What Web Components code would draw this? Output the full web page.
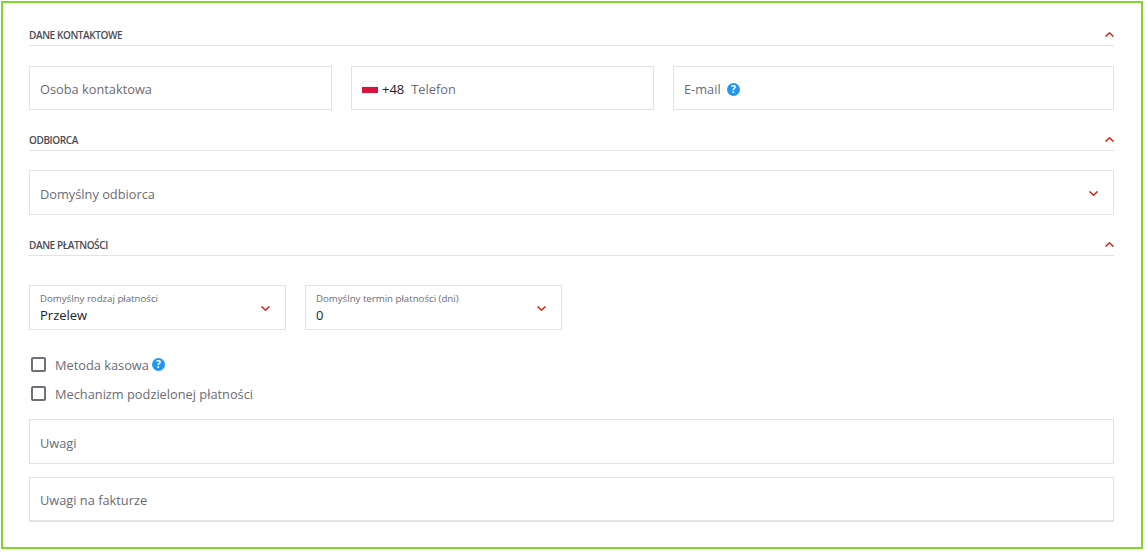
<!DOCTYPE html>
<html lang="pl"><head><meta charset="utf-8"><title>Dane</title>
<style>
html,body{margin:0;background:#fff}
body{font-family:"Open Sans",sans-serif;color:#6b6b76}
</style></head><body>
<form-frame>
  <form-section title="DANE KONTAKTOWE" style="margin-bottom:20px"></form-section>
  <form-row style="--cols:303px 303px 441px;margin-bottom:18px">
    <text-field label="Osoba kontaktowa"></text-field>
    <text-field label="Telefon" prefix="+48" flag></text-field>
    <text-field label="E-mail" help></text-field>
  </form-row>
  <form-section title="ODBIORCA" style="margin-bottom:19px"></form-section>
  <form-row style="--cols:1085px;margin-bottom:18px">
    <text-field label="Domyślny odbiorca" select tall></text-field>
  </form-row>
  <form-section title="DANE PŁATNOŚCI" style="margin-bottom:29px"></form-section>
  <form-row style="--cols:257px 257px;margin-bottom:20px">
    <float-select label="Domyślny rodzaj płatności" value="Przelew"></float-select>
    <float-select label="Domyślny termin płatności (dni)" value="0"></float-select>
  </form-row>
  <check-box label="Metoda kasowa" help></check-box>
  <check-box label="Mechanizm podzielonej płatności" style="margin-bottom:11px"></check-box>
  <text-field label="Uwagi" tall style="margin-bottom:13px"></text-field>
  <text-field label="Uwagi na fakturze" tall thick></text-field>
</form-frame>
<script>
const HELP=(s)=>`<svg class="help" width="${s}" height="${s}" viewBox="0 0 14 14"><circle cx="7" cy="7" r="7" fill="#2196f3"/><text x="7" y="11" text-anchor="middle" font-family="'Open Sans',sans-serif" font-size="11" font-weight="700" fill="#fff">?</text></svg>`;
const CHEV=(up)=>`<svg class="cv" width="9" height="5" viewBox="0 0 9 5" style="display:block"><path d="${up?'M.5 4.6 4.500.8l4 3.800':'M.5.4l4 3.800 4-3.800'}" fill="none" stroke="#d8200c" stroke-width="1.4"/></svg>`;
class Base extends HTMLElement{
  render(html){ if(!this.shadowRoot) this.attachShadow({mode:'open'}); this.shadowRoot.innerHTML=html; }
}
customElements.define('form-frame',class extends Base{connectedCallback(){this.render(`<style>
:host{display:block;box-sizing:border-box;margin:1px;width:1142px;height:548px;border:2px solid #7ed62f;padding:20px 27px 0 26px}
</style><slot></slot>`)}});
customElements.define('form-section',class extends Base{connectedCallback(){this.render(`<style>
:host{display:flex;box-sizing:border-box;height:23px;border-bottom:1px solid #e2e2e2;align-items:flex-start;justify-content:space-between;padding-top:6px;font:600 10px/12px "Open Sans",sans-serif;letter-spacing:-.4px;color:#4a4a52;width:1085px}
svg{margin-top:3px}
</style><span>${this.getAttribute('title')}</span>${CHEV(true)}`)}});
customElements.define('form-row',class extends Base{connectedCallback(){this.render(`<style>
:host{display:grid;grid-template-columns:var(--cols);column-gap:19px}
</style><slot></slot>`)}});
customElements.define('text-field',class extends Base{connectedCallback(){
const a=n=>this.hasAttribute(n);
this.render(`<style>
:host{display:flex;align-items:center;box-sizing:border-box;height:${a('tall')?45:44}px;border:1px solid #e2e2e2;${a('thick')?'border-bottom-width:2px;':''}padding:2px 15px 0 10px;font:400 12.8px/18px "Open Sans",sans-serif;color:#6b6b76}
.flag{box-sizing:border-box;width:16px;height:12px;display:flex;flex-direction:column;margin:0 4px 4px 0;flex:none}
.flag i{flex:1;display:block}
.pre{color:#22222a;margin-right:7px;font-size:13px}
.help{margin-left:6px}
.chev{margin-left:auto}
</style>
${a('flag')?'<span class="flag"><i style="background:#fcfcfc;box-shadow:inset 0 0 0 1px #f1f1f1"></i><i style="background:#dc143c"></i></span>':''}
${this.getAttribute('prefix')?`<span class="pre">${this.getAttribute('prefix')}</span>`:''}
<span>${this.getAttribute('label')}</span>${a('help')?HELP(13):''}
${a('select')?`<span class="chev">${CHEV(false)}</span>`:''}`)}});
customElements.define('float-select',class extends Base{connectedCallback(){this.render(`<style>
:host{display:flex;align-items:center;justify-content:space-between;box-sizing:border-box;height:45px;border:1px solid #e2e2e2;padding:0 15px 0 10px}
.l{font:400 9.66px/12px "Open Sans",sans-serif;color:#6b6b76;display:block;margin-top:1px}
.v{font:400 13px/18px "Open Sans",sans-serif;color:#22222a;display:block;margin:1px 0 -1px}
.cv{margin-top:2px}
</style><span><span class="l">${this.getAttribute('label')}</span><span class="v">${this.getAttribute('value')}</span></span>${CHEV(false)}`)}});
customElements.define('check-box',class extends Base{connectedCallback(){this.render(`<style>
:host{display:flex;align-items:center;box-sizing:border-box;height:29px;font:400 12.8px/18px "Open Sans",sans-serif;color:#6b6b76}
.b{box-sizing:border-box;width:15px;height:15px;border:2px solid #6f6f78;border-radius:2px;margin:0 9px 0 2px;flex:none}
.help{margin-left:3px}
</style><span class="b"></span><span>${this.getAttribute('label')}</span>${this.hasAttribute('help')?HELP(13):''}`)}});
</script>
</body></html>
